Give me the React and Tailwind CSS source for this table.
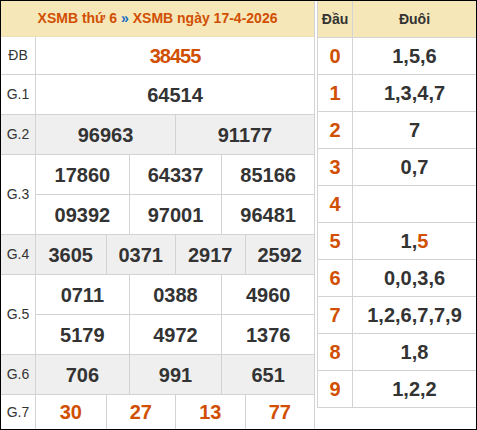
import React from 'react';

const ORANGE = 'text-[#d14f02]';

const leftRows = [
  { label: 'ĐB', lines: [['38455']], h: 'h-[38px]', special: true },
  { label: 'G.1', lines: [['64514']], h: 'h-[40px]' },
  { label: 'G.2', lines: [['96963', '91177']], h: 'h-[40px]', gray: true },
  { label: 'G.3', lines: [['17860', '64337', '85166'], ['09392', '97001', '96481']], h: 'h-[80px]' },
  { label: 'G.4', lines: [['3605', '0371', '2917', '2592']], h: 'h-[40px]', gray: true },
  { label: 'G.5', lines: [['0711', '0388', '4960'], ['5179', '4972', '1376']], h: 'h-[80px]' },
  { label: 'G.6', lines: [['706', '991', '651']], h: 'h-[40px]', gray: true },
  { label: 'G.7', lines: [['30', '27', '13', '77']], h: 'h-[34px]', red: true, last: true },
];

const gridCols = {
  1: 'grid-cols-1',
  2: 'grid-cols-2',
  3: 'grid-cols-3',
  4: 'grid-cols-4',
};

const loto = [
  ['1,5,6'],
  ['1,3,4,7'],
  ['7'],
  ['0,7'],
  [''],
  ['1,', '5'],
  ['0,0,3,6'],
  ['1,2,6,7,7,9'],
  ['1,8'],
  ['1,2,2'],
];

const PrizeRow = ({ row }) => {
  const numColor = row.special || row.red ? ORANGE : 'text-[#333]';
  return (
    <div
      className={`flex ${row.h} ${row.last ? '' : 'border-b border-[#d3d3d3]'} ${
        row.gray ? 'bg-[#efefef]' : 'bg-white'
      }`}
    >
      <div className="w-[35px] shrink-0 border-r border-[#d3d3d3] flex items-center justify-center text-[14px] text-[#333]">
        {row.label}
      </div>
      <div className="flex-1 flex flex-col">
        {row.lines.map((line, li) => (
          <div
            key={li}
            className={`flex-1 grid ${gridCols[line.length]} ${
              li < row.lines.length - 1 ? 'border-b border-[#d3d3d3]' : ''
            }`}
          >
            {line.map((n, i) => (
              <div
                key={i}
                className={`flex items-center justify-center font-bold text-[20px] ${numColor} ${
                  row.special ? 'tracking-[-1px]' : ''
                } ${i > 0 ? 'border-l border-[#d3d3d3]' : ''}`}
              >
                {n}
              </div>
            ))}
          </div>
        ))}
      </div>
    </div>
  );
};

export default function App() {
  return (
    <div className="w-[477px] h-[430px] border border-black bg-white flex font-['Liberation_Sans',Arial,sans-serif]">
      {/* bảng kết quả */}
      <div className="w-[314px] shrink-0 border-r border-[#d3d3d3] flex flex-col">
        <div className="h-[36px] bg-[#f6e7b8] flex items-center justify-center font-bold text-[14px] text-[#d14f02] border-b border-[#ece0b8]">
          XSMB thứ 6 <span className="text-[#1a6fc4] mx-[4px]">»</span> XSMB ngày 17-4-2026
        </div>
        {leftRows.map((row) => (
          <PrizeRow key={row.label} row={row} />
        ))}
      </div>

      <div className="w-[2px] shrink-0" />

      {/* bảng loto đầu đuôi */}
      <div className="flex-1 flex flex-col">
        <div className="border-l border-[#d3d3d3]">
          <div className="h-[37px] flex bg-[#f6e7b8] border-b border-[#d3d3d3] font-bold text-[14px] text-[#333]">
            <div className="w-[35px] shrink-0 border-r border-[#d3d3d3] flex items-center justify-center">
              Đầu
            </div>
            <div className="flex-1 flex items-center justify-center">Đuôi</div>
          </div>
          {loto.map((parts, d) => (
            <div key={d} className="h-[37px] flex border-b border-[#d3d3d3] font-bold text-[20px]">
              <div className={`w-[35px] shrink-0 border-r border-[#d3d3d3] flex items-center justify-center ${ORANGE}`}>
                {d}
              </div>
              <div className="flex-1 flex items-center justify-center text-[#333]">
                {parts[0]}
                {parts[1] && <span className={ORANGE}>{parts[1]}</span>}
              </div>
            </div>
          ))}
        </div>
      </div>
    </div>
  );
}
